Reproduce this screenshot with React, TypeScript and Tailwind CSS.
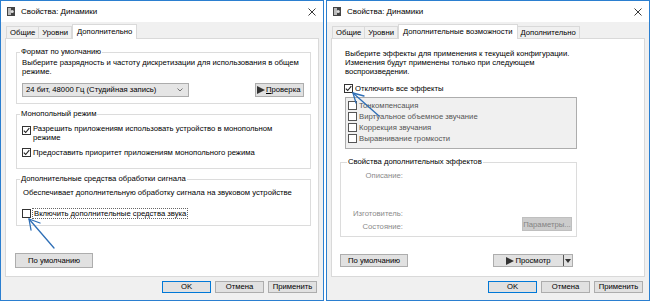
import React from 'react';

const font = "font-['Liberation_Sans',Arial,sans-serif]";

function Check({ checked = false, disabled = false }: { checked?: boolean; disabled?: boolean }) {
  return (
    <span
      className={`w-[9px] h-[9px] border ${disabled ? 'border-[#555]' : 'border-[#333]'} bg-white flex items-center justify-center shrink-0`}
    >
      {checked && (
        <svg width="7" height="7" viewBox="0 0 7 7">
          <path d="M0.8 3.6 L2.7 5.5 L6.3 1.2" fill="none" stroke="#222" strokeWidth="1.1" />
        </svg>
      )}
    </span>
  );
}

function Btn({ children, className = '', primary = false }: { children: React.ReactNode; className?: string; primary?: boolean }) {
  return (
    <div
      className={`h-[12px] flex items-center justify-center bg-[#e1e1e1] border ${primary ? 'border-[#0078d7]' : 'border-[#adadad]'} text-black ${className}`}
    >
      {children}
    </div>
  );
}

function Group({ label, className = '', labelClass = 'ml-[3px]', children }: { label: string; className?: string; labelClass?: string; children: React.ReactNode }) {
  return (
    <div className={`border border-[#dcdcdc] ${className}`}>
      <div className={`-mt-[6px] px-[1px] bg-white w-fit leading-[10px] text-black ${labelClass}`}>{label}</div>
      {children}
    </div>
  );
}

function Window({ tabs, active, children }: { tabs: string[]; active: number; children: React.ReactNode }) {
  return (
    <div className="w-[324px] h-[301px] border border-[#2b7fd0] flex flex-col bg-[#f0f0f0]">
      <div className="h-[21px] bg-white flex items-center pl-[6px] pr-[6px]">
        <svg width="8" height="9" viewBox="0 0 8 9" className="shrink-0">
          <rect x="0" y="0" width="8" height="9" fill="#444" />
          <rect x="1" y="1" width="3" height="7" fill="#bbb" />
          <circle cx="5.2" cy="4.5" r="1.6" fill="#ddd" />
        </svg>
        <span className="ml-[6px] text-[8px]">Свойства: Динамики</span>
        <svg width="8" height="8" viewBox="0 0 8 8" className="ml-auto mr-[1px]">
          <path d="M0.5 0.5 L7.5 7.5 M7.5 0.5 L0.5 7.5" stroke="#222" strokeWidth="0.9" />
        </svg>
      </div>
      <div className="flex items-end h-[16px] pl-[5px]">
        {tabs.map((t, i) => (
          <div
            key={t}
            className={
              i === active
                ? 'h-[15px] px-[4px] bg-white border border-b-0 border-[#d9d9d9] -mb-[1px] relative z-10 flex items-center'
                : 'h-[12px] px-[3px] bg-[#f0f0f0] border border-b-0 border-[#d9d9d9] -ml-[1px] first:ml-0 flex items-center'
            }
          >
            {t}
          </div>
        ))}
      </div>
      <div className="mx-[4px] h-[239px] bg-white border border-[#d9d9d9] flex flex-col">{children}</div>
      <div className="flex justify-end gap-[4px] pr-[6px] mt-[4px]">
        <Btn primary className="w-[49px]">OK</Btn>
        <Btn className="w-[49px]">Отмена</Btn>
        <Btn className="w-[49px]">Применить</Btn>
      </div>
    </div>
  );
}

function LeftDialog() {
  return (
    <Window tabs={['Общие', 'Уровни', 'Дополнительно']} active={2}>
      <div className="pl-[10px] pr-[7px] pt-[13px] flex flex-col">
        <Group label="Формат по умолчанию" className="pb-[6px]">
          <div className="pl-[5px] mt-[1px] leading-[9px] whitespace-nowrap">
            Выберите разрядность и частоту дискретизации для использования в общем
            <br />
            режиме.
          </div>
          <div className="flex items-center mt-[7px] pl-[5px] pr-[6px]">
            <div className="w-[167px] h-[14px] bg-[#e5e5e5] border border-[#acacac] flex items-center pl-[3px] pr-[5px]">
              <span>24 бит, 48000 Гц (Студийная запись)</span>
              <svg width="6" height="4" viewBox="0 0 6 4" className="ml-auto">
                <path d="M0.5 0.5 L3 3 L5.5 0.5" fill="none" stroke="#555" strokeWidth="0.8" />
              </svg>
            </div>
            <Btn className="ml-auto w-[49px] !h-[14px] !justify-start pl-[1px]">
              <svg width="8" height="8" viewBox="0 0 8 8" className="shrink-0">
                <path d="M0 0 L8 4 L0 8 Z" fill="#333" />
              </svg>
              <span className="ml-[1px] underline decoration-[0.5px] underline-offset-1">П</span>
              <span>роверка</span>
            </Btn>
          </div>
        </Group>

        <Group label="Монопольный режим" className="mt-[10px] pb-[11px]">
          <div className="flex pl-[5px] mt-[5px] leading-[9px]">
            <span className="mt-[2px]"><Check checked /></span>
            <span className="ml-[2px] whitespace-nowrap">Разрешить приложениям использовать устройство в монопольном<br />режиме</span>
          </div>
          <div className="flex items-center pl-[5px] mt-[6px] leading-[9px]">
            <Check checked />
            <span className="ml-[2px]">Предоставить приоритет приложениям монопольного режима</span>
          </div>
        </Group>

        <Group label="Дополнительные средства обработки сигнала" className="mt-[10px] pb-[6px]">
          <div className="pl-[6px] mt-[4px] leading-[9px] whitespace-nowrap">Обеспечивает дополнительную обработку сигнала на звуковом устройстве</div>
          <div className="flex items-center pl-[5px] mt-[11px] leading-[9px]">
            <Check />
            <span className="ml-[1px] px-[1px] border border-dotted border-[#666]">Включить дополнительные средства звука</span>
          </div>
        </Group>

        <Btn className="w-[78px] !h-[15px] mt-[27px] -ml-[1px]">По умолчанию</Btn>
      </div>
    </Window>
  );
}

function RightDialog() {
  const effects = ['Тонкомпенсация', 'Виртуальное объемное звучание', 'Коррекция звучания', 'Выравнивание громкости'];
  return (
    <Window tabs={['Общие', 'Уровни', 'Дополнительные возможности', 'Дополнительно']} active={2}>
      <div className="pl-[8px] pr-[67px] pt-[10px] flex flex-col leading-[9px]">
        <div className="pl-[5px] whitespace-nowrap">
          Выберите эффекты для применения к текущей конфигурации.
          <br />
          Изменения будут применены только при следующем
          <br />
          воспроизведении.
        </div>
        <div className="flex items-center mt-[8px] pl-[4px]">
          <Check checked />
          <span className="ml-[2px]">Отключить все эффекты</span>
        </div>
        <div className="ml-[5px] mt-[4px] h-[52px] bg-[#f0f0f0] border border-[#adadad] pl-[2px] pt-[2px] flex flex-col text-[#555]">
          {effects.map((e) => (
            <div key={e} className="h-[11px] flex items-center">
              <Check disabled />
              <span className="ml-[2px]">{e}</span>
            </div>
          ))}
        </div>
        <Group label="Свойства дополнительных эффектов" labelClass="ml-[6px]" className="mt-[13px] h-[75px] flex flex-col">
          <div className="flex flex-col leading-[9px] mt-[4px] text-[#8a8a8a]">
            <div className="w-[62px] text-right">Описание:</div>
            <div className="w-[62px] text-right mt-[29px]">Изготовитель:</div>
            <div className="flex items-center mt-[3px]">
              <div className="w-[62px] text-right">Состояние:</div>
              <div className="ml-auto mr-[4px] w-[50px] h-[14px] bg-[#cccccc] border border-[#bfbfbf] flex items-center justify-center text-[#838383] -mt-[4px]">
                Параметры...
              </div>
            </div>
          </div>
        </Group>
        <div className="flex items-center mt-[17px]">
          <Btn className="w-[68px] !h-[13px]">По умолчанию</Btn>
          <div className="ml-auto mr-[4px] w-[80px] h-[13px] bg-[#e1e1e1] border border-[#adadad] flex items-center">
            <div className="flex-1 flex items-center justify-center">
              <svg width="8" height="8" viewBox="0 0 8 8">
                <path d="M0 0 L8 4 L0 8 Z" fill="#333" />
              </svg>
              <span className="ml-[1px]">Просмотр</span>
            </div>
            <div className="w-[9px] h-full border-l border-[#555] flex items-center justify-center">
              <svg width="6" height="4" viewBox="0 0 6 4">
                <path d="M0 0 L6 0 L3 4 Z" fill="#333" />
              </svg>
            </div>
          </div>
        </div>
      </div>
    </Window>
  );
}

export default function App() {
  return (
    <div className={`relative w-[650px] h-[301px] bg-white flex gap-[2px] text-[7.7px] text-black ${font}`}>
      <LeftDialog />
      <RightDialog />
      <svg className="absolute inset-0 pointer-events-none" width="650" height="301" viewBox="0 0 650 301">
        <g stroke="#2f6fb6" strokeWidth="1.3" fill="none" strokeLinecap="round">
          <path d="M54 248 L29 219" />
          <path d="M29 219 L40 223 M29 219 L31 230" />
          <path d="M379 116 L353 93" />
          <path d="M353 93 L364 96 M353 93 L356 103" />
        </g>
      </svg>
    </div>
  );
}
